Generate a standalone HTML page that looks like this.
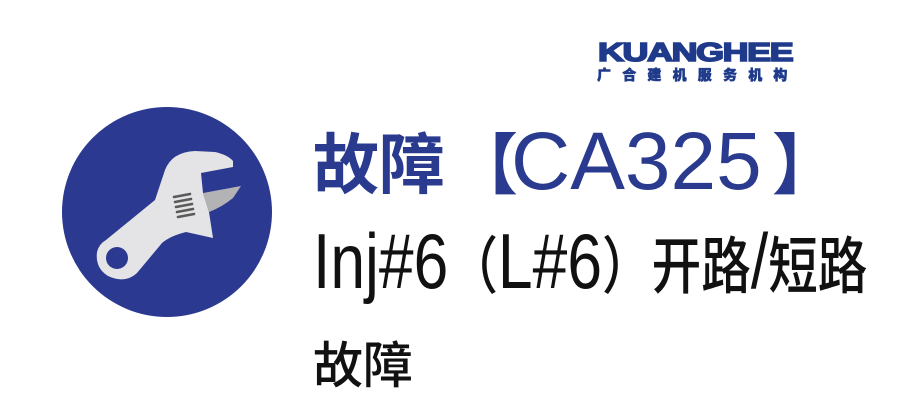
<!DOCTYPE html>
<html><head><meta charset="utf-8"><style>
html,body{margin:0;padding:0;background:#fff;width:900px;height:416px;overflow:hidden;position:relative}
.a{position:absolute;white-space:nowrap;line-height:1}
.cjk{font-family:"Noto Sans CJK SC","WenQuanYi Zen Hei",sans-serif}
.lat{font-family:"Liberation Sans",sans-serif}
</style></head><body>
<svg class="a" style="left:0;top:0" width="300" height="416" viewBox="0 0 300 416">
<circle cx="167" cy="212" r="105" fill="#2b3990"/>
<path d="M155,200 L165,170 Q172,152 195,151 L215,152 Q228,155 233,161 L233,167 L201,173 L203,193 L209,212 L213,238 L186,232 Q170,236 162,243 L137,273 Q125,284 108,276 Q95,268 97,252 Q99,244 106,240 Z" fill="#e4e4e6"/>
<path d="M203,193 L241,186 L233,198 Q222,207 209,212 Z" fill="#b3b3b5"/>
<circle cx="117" cy="258" r="11" fill="#2b3990"/>
<g stroke="#5a5a5a" stroke-width="2.6" stroke-linecap="round">
<line x1="174" y1="197" x2="190" y2="194"/>
<line x1="175" y1="202" x2="191" y2="199"/>
<line x1="176" y1="207" x2="192" y2="204"/>
<line x1="177" y1="212" x2="193" y2="209"/>
<line x1="178" y1="217" x2="194" y2="214"/>
</g>
</svg>
<div class="a lat" style="left:598px;top:39px;font-size:26px;font-weight:bold;color:#1f3a8a;transform:scaleX(1.38);transform-origin:0 0;letter-spacing:-1px;-webkit-text-stroke:1.6px #1f3a8a">KUANGHEE</div>
<div class="a cjk" style="left:597px;top:68px;font-size:14px;font-weight:900;color:#1f3a8a;letter-spacing:11.2px;-webkit-text-stroke:0.5px #1f3a8a">广合建机服务机构</div>

<div class="a cjk" style="left:313px;top:127px;font-size:66px;font-weight:bold;color:#2a3b8f">故障</div>
<div class="a cjk" style="left:452px;top:127px;font-size:66px;font-weight:bold;color:#2a3b8f">【</div>
<div class="a lat" style="left:511px;top:121px;font-size:82px;color:#2a3b8f">CA325</div>
<div class="a cjk" style="left:772px;top:127px;font-size:66px;font-weight:bold;color:#2a3b8f">】</div>

<div class="a" style="left:313px;top:222px;color:#111;transform:scaleX(0.8);transform-origin:0 0;font-size:62px;font-weight:500"><span class="lat" style="font-size:78px">Inj#6</span><span class="cjk">（</span><span class="lat" style="font-size:78px">L#6</span><span class="cjk">）开路</span><span class="lat" style="font-size:78px">/</span><span class="cjk">短路</span></div>

<div class="a cjk" style="left:313px;top:337px;font-size:50px;font-weight:500;color:#111">故障</div>
</body></html>
